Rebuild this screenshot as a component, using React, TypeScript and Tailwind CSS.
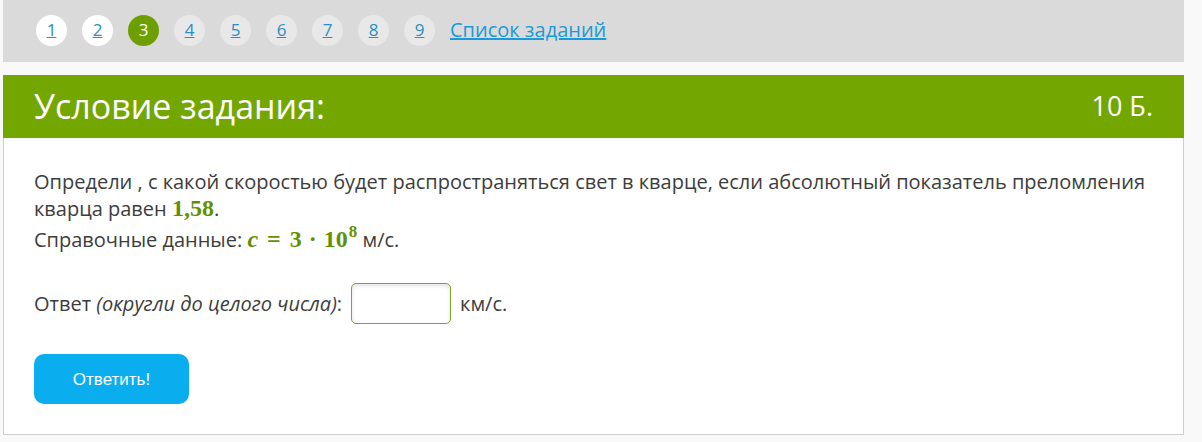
import React from "react";

const nums = [1, 2, 3, 4, 5, 6, 7, 8, 9];

export default function App() {
  return (
    <div className="min-h-[442px] w-[1202px] bg-[#f9f9f9] pl-[3px] pr-[18px] text-[#333]" style={{ fontFamily: '"Open Sans", "Noto Sans", sans-serif' }}>
      <div className="flex h-[62px] items-center gap-[15px] bg-[#dadada] pb-[2px] pl-[33px]">
        {nums.map((n) => (
          <div
            key={n}
            className={
              "flex h-[31px] w-[31px] items-center justify-center rounded-full text-[17px] " +
              (n === 3
                ? "bg-[#6e9f00] text-white"
                : n < 3
                ? "bg-white text-[#2a8fc4] underline"
                : "bg-[#e8e8e8] text-[#2a8fc4] underline")
            }
          >
            {n}
          </div>
        ))}
        <a className="text-[20px] text-[#1a9ad8] underline">Список заданий</a>
      </div>
      <div className="mt-[13px] flex h-[63px] items-center justify-between bg-[#74a600] pl-[31px] pr-[31px] text-white">
        <div className="text-[34px]">Условие задания:</div>
        <div className="text-[27px]">10 Б.</div>
      </div>
      <div className="h-[297px] border border-t-0 border-[#cfcfcf] bg-white px-[30px] pt-[30px] text-[20px] leading-[27px] text-[#3d3d3d]">
        <p>
          Определи , с какой скоростью будет распространяться свет в кварце, если абсолютный показатель преломления кварца равен{" "}
          <span className="inline-block text-[24px] font-bold leading-none text-[#5f9100]" style={{ fontFamily: '"Liberation Serif", serif' }}>1,58</span>.
        </p>
        <p className="mt-[3px] leading-[29px]">
          Справочные данные:{" "}
          <span className="inline-block text-[24px] font-bold leading-none text-[#5f9100]" style={{ fontFamily: '"Liberation Serif", serif' }}>
            <i>c</i>
            <span className="mx-[9px]">=</span>3<span className="mx-[7px]">·</span>10
            <span className="relative top-[-10px] ml-[1px] text-[17px] leading-none">8</span>
          </span>{" "}
          м/с.
        </p>
        <div className="mt-[29px] flex items-center">
          <span>
            Ответ <i>(округли до целого числа)</i>:
          </span>
          <input className="ml-[9px] h-[41px] w-[100px] rounded-[5px] border border-[#7aa82a] bg-white shadow-[inset_0_2px_4px_rgba(0,0,0,0.12)] outline-none" />
          <span className="ml-[9px]">км/с.</span>
        </div>
        <button className="mt-[30px] flex h-[50px] w-[155px] items-center justify-center rounded-[10px] bg-[#0aaeef] text-[17px] text-white" style={{ fontFamily: '"Liberation Sans", Arial, sans-serif' }}>
          Ответить!
        </button>
      </div>
    </div>
  );
}
